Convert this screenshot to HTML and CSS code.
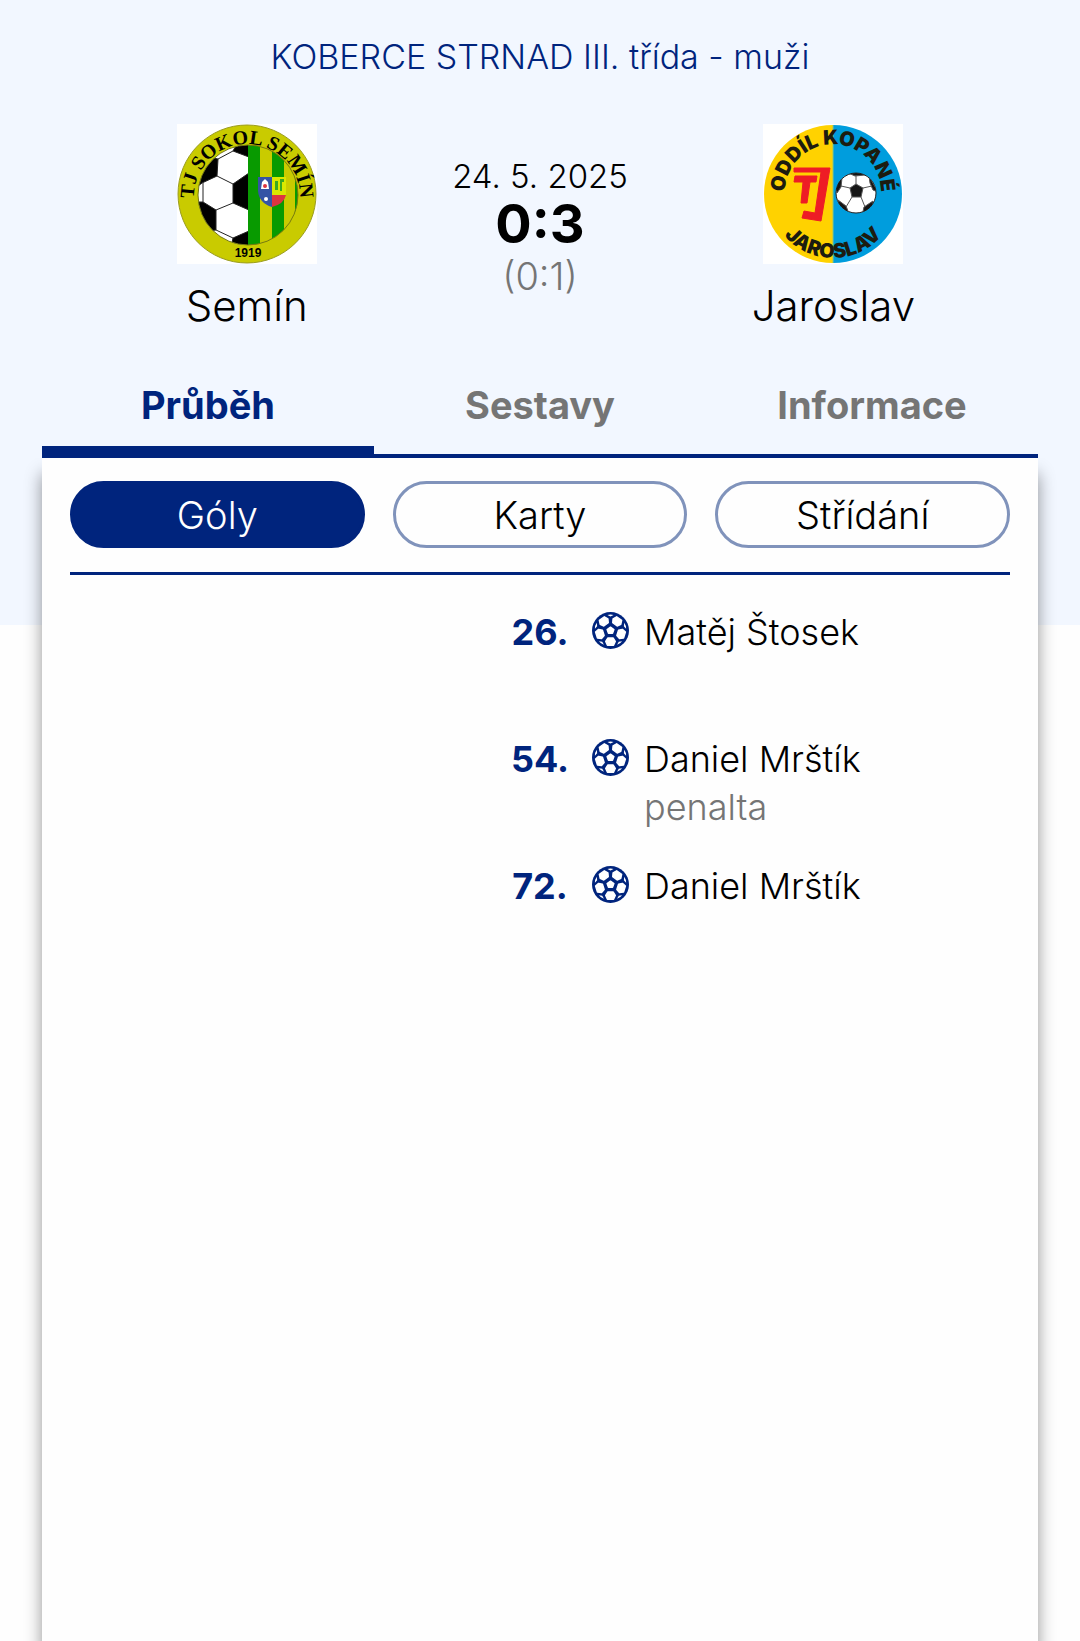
FILE: index.html
```html
<!DOCTYPE html>
<html lang="cs">
<head>
    <meta charset="UTF-8">
    <meta name="viewport" content="width=device-width, initial-scale=1.0">
    <title>Semín - Jaroslav</title>
    <link rel="stylesheet" href="styles.css">
</head>
<body>
    <!-- Shared goal icon -->
    <svg class="sprite" aria-hidden="true">
        <symbol id="ball" viewBox="0 0 108 108">
            <circle cx="54" cy="54" r="54" fill="#00247d"/>
            <g fill="#fff" stroke="#fff" stroke-width="4" stroke-linejoin="round">
                <path d="M54 44l10 7-4 11H48l-4-11z"/>
                <g id="patch">
                    <path d="M46 76h16l6 10-5 11H45l-5-11z"/>
                </g>
                <use href="#patch" transform="rotate(72 54 54)"/>
                <use href="#patch" transform="rotate(144 54 54)"/>
                <use href="#patch" transform="rotate(216 54 54)"/>
                <use href="#patch" transform="rotate(288 54 54)"/>
            </g>
            <g fill="#fff">
                <path id="slit" d="M45 9q9-3 18 0l-9 4z"/>
                <use href="#slit" transform="rotate(72 54 54)"/>
                <use href="#slit" transform="rotate(144 54 54)"/>
                <use href="#slit" transform="rotate(216 54 54)"/>
                <use href="#slit" transform="rotate(288 54 54)"/>
            </g>
        </symbol>
    </svg>

    <header class="match-header">
        <h1 class="league">KOBERCE STRNAD III. třída - muži</h1>

        <div class="teams">
            <div class="team">
                <svg class="crest" viewBox="0 0 140 140" role="img" aria-label="TJ Sokol Semín">
                    <defs>
                        <path id="semin-arc" d="M17 73A53 53 0 1 1 123 73"/>
                        <clipPath id="semin-clip"><circle cx="71" cy="71" r="50"/></clipPath>
                    </defs>
                    <rect width="140" height="140" fill="#fff"/>
                    <circle cx="70" cy="70" r="69" fill="#c9cb00" stroke="#9a9c20"/>
                    <g clip-path="url(#semin-clip)">
                        <rect x="20" y="20" width="51" height="102" fill="#fff"/>
                        <g stroke="#222" stroke-width="1">
                            <path d="M18 30L41 35 40 52 25 59 16 66z"/>
                            <path d="M56 27L62 16H72V33z"/>
                            <path d="M56 60L72 49V86L56 79z"/>
                            <path d="M18 78L26 78 39 86V106L24 108z"/>
                            <path d="M56 114L72 107V124H54z"/>
                            <path d="M41 35L56 27M40 52L56 60M26 59V78M39 86L56 79M39 106L56 114" fill="none"/>
                        </g>
                        <rect x="71" y="20" width="51" height="102" fill="#c9cb00"/>
                        <rect x="71" y="20" width="12" height="102" fill="#089a00"/>
                        <rect x="95" y="20" width="12" height="102" fill="#089a00"/>
                        <rect x="118" y="20" width="6" height="102" fill="#089a00"/>
                    </g>
                    <circle cx="71" cy="71" r="50" fill="none" stroke="#777a10"/>
                    <path d="M81 53H95V83Q82 79 81 67z" fill="#3554a5"/>
                    <path d="M95 53H109V67H95z" fill="#d9e800"/>
                    <path d="M95 71H109Q107 80 95 83z" fill="#dd3540"/>
                    <path d="M95 67H109V71H95z" fill="#d9e800"/>
                    <path d="M88 55L91 58 92 65H84L85 58z" fill="#fff"/>
                    <circle cx="88" cy="62" r="2" fill="#dd3540"/>
                    <circle cx="89" cy="75" r="2" fill="#fff"/>
                    <path d="M98 57h3v9h-3zM103 55h4v3h-2v9h-2z" fill="#3aa820"/>
                    <text class="semin-text" text-anchor="middle"><textPath href="#semin-arc" startOffset="50%">TJ SOKOL SEMÍN</textPath></text>
                    <text class="semin-year" x="71" y="133" text-anchor="middle">1919</text>
                </svg>
                <h2 class="team-name">Semín</h2>
            </div>

            <div class="result">
                <div class="date">24. 5. 2025</div>
                <div class="score">0:3</div>
                <div class="half-time">(0:1)</div>
            </div>

            <div class="team">
                <svg class="crest" viewBox="0 0 140 140" role="img" aria-label="Oddíl kopané Jaroslav">
                    <defs>
                        <path id="jaroslav-top" d="M23 78A48 48 0 1 1 117 78"/>
                        <path id="jaroslav-bottom" d="M6 70A64 64 0 0 0 134 70"/>
                        <clipPath id="jaroslav-ball"><circle cx="93" cy="69" r="20"/></clipPath>
                    </defs>
                    <rect width="140" height="140" fill="#fff"/>
                    <path d="M70 1A69 69 0 0 0 70 139z" fill="#ffd200"/>
                    <path d="M70 1A69 69 0 0 1 70 139z" fill="#009ddd"/>
                    <path d="M70 1V139" stroke="#8fc77a"/>
                    <path d="M31 44H67L58 97 39 94 41 87 52 89 58 48H31z" fill="#ee1c25" stroke="#ee1c25"/>
                    <path d="M32 52H54L53 58H47L44 79H38L40 58H31z" fill="#ee1c25" stroke="#ee1c25"/>
                    <circle cx="93" cy="69" r="20" fill="#fff" stroke="#222"/>
                    <g clip-path="url(#jaroslav-ball)" fill="#151515" stroke="#555">
                        <path d="M87 64L93 60 100 64 98 73H89z"/>
                        <path d="M83 48L92 52 102 51 100 44z"/>
                        <path d="M106 52L115 68 110 66 107 59z"/>
                        <path d="M70 60L79 54 78 63 74 69z"/>
                        <path d="M75 76L83 82 87 92H76z"/>
                        <path d="M101 83L110 77 110 88 99 92z"/>
                        <path d="M87 64L78 62M93 60V51M100 64L109 62M98 73L102 83M89 73L83 83" fill="none"/>
                    </g>
                    <text class="jaroslav-text" text-anchor="middle"><textPath href="#jaroslav-top" startOffset="50%">ODDÍL KOPANÉ</textPath></text>
                    <text class="jaroslav-text" text-anchor="middle"><textPath href="#jaroslav-bottom" startOffset="50%">JAROSLAV</textPath></text>
                </svg>
                <h2 class="team-name">Jaroslav</h2>
            </div>
        </div>

        <nav class="tabs">
            <a class="tab active" href="#prubeh">Průběh</a>
            <a class="tab" href="#sestavy">Sestavy</a>
            <a class="tab" href="#informace">Informace</a>
        </nav>
    </header>

    <main class="card" id="prubeh">
        <div class="filters">
            <button class="pill active" type="button">Góly</button>
            <button class="pill" type="button">Karty</button>
            <button class="pill" type="button">Střídání</button>
        </div>

        <ul class="events">
            <li class="event">
                <span class="minute">26.</span>
                <div class="away">
                    <svg class="icon"><use href="#ball"/></svg>
                    <div>Matěj Štosek</div>
                </div>
            </li>
            <li class="event">
                <span class="minute">54.</span>
                <div class="away">
                    <svg class="icon"><use href="#ball"/></svg>
                    <div>Daniel Mrštík<div class="note">penalta</div></div>
                </div>
            </li>
            <li class="event">
                <span class="minute">72.</span>
                <div class="away">
                    <svg class="icon"><use href="#ball"/></svg>
                    <div>Daniel Mrštík</div>
                </div>
            </li>
        </ul>
    </main>
</body>
</html>
```
FILE: styles.css
```css
* {
    box-sizing: border-box;
}

body {
    margin: 0;
    min-height: 100vh;
    display: flex;
    flex-direction: column;
    overflow-x: hidden;
    background: #fefefe;
    color: #000;
    font-family: Inter, "Liberation Sans", sans-serif;
    font-size: 36px;
    font-weight: 300;
    line-height: 48px;
}

h1, h2 {
    margin: 0;
    font-weight: 300;
}

.sprite {
    position: absolute;
    width: 0;
    height: 0;
}

/* the blue area runs on behind the top of the card */
.match-header {
    padding: 33px 42px 167px;
    background: #f2f7ff;
}

.league {
    color: #00247d;
    font-size: 34px;
    text-align: center;
}

.teams {
    display: grid;
    grid-template-columns: repeat(3, 1fr);
    margin-top: 43px;
    padding: 0 58px;
    text-align: center;
}

.crest {
    display: block;
    width: 140px;
    height: 140px;
    margin: 0 auto 14px;
}

.team-name {
    font-size: 42px;
    line-height: 56px;
}

.result {
    padding-top: 32px;
}

.date {
    font-size: 33px;
    line-height: 40px;
}

.score {
    font-size: 54px;
    font-weight: 700;
    line-height: 56px;
}

.half-time {
    color: #757575;
    font-size: 38px;
}

.semin-text {
    font: bold 20px "Liberation Serif", serif;
}

.semin-year {
    font: bold 12px "Liberation Sans", sans-serif;
}

.jaroslav-text {
    font: 900 20px Inter, sans-serif;
    fill: #1c1c10;
}

.tabs {
    display: grid;
    grid-template-columns: repeat(3, 1fr);
    margin-top: 47px;
    border-bottom: 4px solid #00247d;
}

.tab {
    padding-bottom: 17px;
    border-bottom: 8px solid transparent;
    color: #757575;
    font-size: 38px;
    font-weight: 700;
    text-align: center;
    text-decoration: none;
}

.tab.active {
    border-color: #00247d;
    color: #00247d;
}

.card {
    flex: 1;
    margin: -167px 42px 0;
    padding: 23px 28px;
    background: #fefefe;
    box-shadow: 0 16px 16px rgba(0, 0, 0, 0.42);
    clip-path: inset(0 -42px);
}

.filters {
    display: grid;
    grid-template-columns: repeat(3, 1fr);
    gap: 28px;
    padding-bottom: 24px;
    border-bottom: 3px solid #00247d;
}

.pill {
    height: 67px;
    border: 3px solid #8093bb;
    border-radius: 34px;
    background: #fefefe;
    color: #000;
    font: inherit;
    font-size: 38px;
    cursor: pointer;
}

.pill.active {
    border-color: #00247d;
    background: #00247d;
    color: #fff;
}

.events {
    list-style: none;
    margin: 33px 0 0;
    padding: 0;
}

.event {
    display: grid;
    grid-template-columns: 1fr 104px 1fr;
    min-height: 127px;
}

.minute {
    grid-column: 2;
    color: #00247d;
    font-weight: 700;
    text-align: center;
}

.away {
    display: flex;
    gap: 15px;
}

.icon {
    flex: none;
    width: 37px;
    height: 37px;
    margin-top: 4px;
}

.note {
    color: #757575;
}
```
